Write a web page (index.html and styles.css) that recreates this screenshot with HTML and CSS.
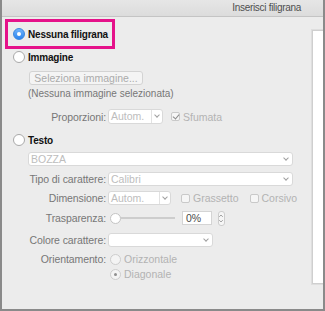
FILE: index.html
```html
<!DOCTYPE html>
<html lang="it">
<head>
    <meta charset="UTF-8">
    <title>Inserisci filigrana</title>
    <link rel="stylesheet" href="styles.css">
</head>
<body>
    <div class="window">
        <div class="titlebar">Inserisci filigrana</div>
        <div class="main">
            <div class="options">
                <div class="highlight">
                    <label class="radio-row">
                        <span class="radio checked"></span>
                        <span class="radio-label">Nessuna filigrana</span>
                    </label>
                </div>

                <label class="radio-row section">
                    <span class="radio"></span>
                    <span class="radio-label">Immagine</span>
                </label>
                <div class="button-row">
                    <span class="button">Seleziona immagine...</span>
                </div>
                <div class="note">(Nessuna immagine selezionata)</div>
                <div class="field-row row-prop">
                    <span class="field-label">Proporzioni:</span>
                    <span class="select w-prop"><span class="value">Autom.</span><span class="arrow"></span></span>
                    <span class="check checked"></span>
                    <span class="check-label">Sfumata</span>
                </div>

                <label class="radio-row section-testo">
                    <span class="radio"></span>
                    <span class="radio-label">Testo</span>
                </label>
                <div class="field-row row-bozza">
                    <span class="select w-bozza"><span class="value">BOZZA</span><span class="arrow plain"></span></span>
                </div>
                <div class="field-row row-tipo">
                    <span class="field-label">Tipo di carattere:</span>
                    <span class="select w-tipo"><span class="value">Calibri</span><span class="arrow plain"></span></span>
                </div>
                <div class="field-row row-dim">
                    <span class="field-label">Dimensione:</span>
                    <span class="select w-dim"><span class="value">Autom.</span><span class="arrow"></span></span>
                    <span class="check"></span>
                    <span class="check-label">Grassetto</span>
                    <span class="check gap-corsivo"></span>
                    <span class="check-label">Corsivo</span>
                </div>
                <div class="field-row row-trasp">
                    <span class="field-label">Trasparenza:</span>
                    <span class="slider"><span class="knob"></span><span class="track"></span></span>
                    <span class="textbox">0%</span>
                    <span class="stepper">
                        <svg width="7" height="15" viewBox="0 0 7 15"><path d="M1.5 5.5 L3.5 3.5 L5.5 5.5 M1.5 9.5 L3.5 11.5 L5.5 9.5" fill="none" stroke="#8a8a8a" stroke-width="1"/></svg>
                    </span>
                </div>
                <div class="field-row row-colore">
                    <span class="field-label">Colore carattere:</span>
                    <span class="select w-colore"><span class="value"></span><span class="arrow plain"></span></span>
                </div>
                <div class="field-row row-orient">
                    <span class="field-label">Orientamento:</span>
                    <span class="radio disabled"></span>
                    <span class="dis-label">Orizzontale</span>
                </div>
                <div class="field-row row-diag">
                    <span class="field-label"></span>
                    <span class="radio disabled dot"></span>
                    <span class="dis-label">Diagonale</span>
                </div>
            </div>
            <div class="preview"></div>
        </div>
    </div>
</body>
</html>
```

FILE: styles.css
```css
* {
    box-sizing: border-box;
}
body {
    margin: 0;
    font-family: "Liberation Sans", Arial, sans-serif;
    font-size: 10.5px;
    color: #6f6f6f;
}
.window {
    width: 325px;
    height: 311px;
    background: #ececec;
    border: 2px solid #8a8a8a;
    border-top: none;
    overflow: hidden;
}
.titlebar {
    height: 17px;
    line-height: 16px;
    font-size: 10px;
    letter-spacing: -0.3px;
    background: linear-gradient(#e6e6e6, #dcdcdc);
    border-bottom: 1px solid #c4c4c4;
    color: #4f4f4f;
    text-align: right;
    padding-right: 22px;
}
.main {
    display: flex;
}
.options {
    width: 310px;
    flex: none;
}
.preview {
    margin-top: 13px;
    height: 254px;
    width: 20px;
    flex: none;
    background: #fff;
    border: 1px solid #cfcfcf;
    border-right: none;
    box-shadow: 0 0 0 1px #dedede;
}

/* radios */
.radio-row {
    display: flex;
    align-items: center;
    height: 14px;
    padding-left: 11px;
    white-space: nowrap;
}
.radio {
    width: 12px;
    height: 12px;
    border-radius: 50%;
    background: #fff;
    border: 1px solid #a9a9a9;
    flex: none;
    position: relative;
}
.radio.checked {
    background: linear-gradient(#6fb3fa, #2a84f0);
    border-color: #3a86dd;
}
.radio.checked::after {
    content: "";
    position: absolute;
    left: 3px;
    top: 3px;
    width: 4px;
    height: 4px;
    border-radius: 50%;
    background: #fff;
}
.radio.disabled {
    width: 11px;
    height: 11px;
    border-color: #cdcdcd;
    background: #f4f4f4;
}
.radio.dot::after {
    content: "";
    position: absolute;
    left: 3px;
    top: 3px;
    width: 3px;
    height: 3px;
    border-radius: 50%;
    background: #8f8f8f;
}
.radio-label {
    margin-left: 3px;
    font-weight: bold;
    font-size: 10px;
    letter-spacing: -0.2px;
    color: #111;
}
.highlight {
    margin: 2px 0 0 3px;
    width: 110px;
    height: 30px;
    border: 3px solid #e5128a;
    display: flex;
    align-items: center;
}
.highlight .radio-row {
    padding-left: 5px;
}
.section {
    margin-top: 1px;
}
.section-testo {
    margin-top: 9px;
}

.button-row {
    margin-top: 7px;
    padding-left: 27px;
}
.button {
    display: inline-block;
    width: 114px;
    height: 14px;
    line-height: 12px;
    text-align: center;
    background: #f4f4f4;
    border: 1px solid #d3d3d3;
    border-radius: 3px;
    color: #ababab;
}
.note {
    margin-top: 2px;
    padding-left: 26px;
    height: 14px;
    line-height: 14px;
    font-size: 10px;
    color: #777;
}

/* labelled rows */
.field-row {
    display: flex;
    align-items: center;
    height: 14px;
    white-space: nowrap;
}
.field-label {
    width: 104px;
    margin-right: 2px;
    text-align: right;
    flex: none;
    letter-spacing: -0.1px;
    color: #777;
}
.row-prop { margin-top: 8px; height: 15px; }
.row-bozza { margin-top: 5px; padding-left: 26px; }
.row-tipo { margin-top: 6px; }
.row-dim { margin-top: 5px; }
.row-trasp { margin-top: 6px; }
.row-colore { margin-top: 8px; }
.row-orient { margin-top: 5px; }
.row-diag { margin-top: 1px; }

.select {
    display: flex;
    height: 14px;
    background: #fff;
    border: 1px solid #d9d9d9;
    border-radius: 3px;
    color: #bdbdbd;
    flex: none;
}
.select .value {
    flex: 1;
    line-height: 12px;
    padding-left: 2px;
}
.select .arrow {
    width: 11px;
    border-left: 1px solid #e2e2e2;
    position: relative;
}
.select .arrow.plain {
    border-left: none;
}
.select .arrow::after {
    content: "";
    position: absolute;
    left: 3px;
    top: 3px;
    width: 3px;
    height: 3px;
    border-right: 1px solid #a0a0a0;
    border-bottom: 1px solid #a0a0a0;
    transform: rotate(45deg);
}
.w-prop { width: 55px; height: 15px; }
.w-bozza { width: 265px; }
.w-tipo { width: 185px; }
.w-dim { width: 63px; }
.w-colore { width: 105px; }

.check {
    width: 9px;
    height: 9px;
    margin-left: 10px;
    border: 1px solid #c9c9c9;
    border-radius: 2px;
    background: #f6f6f6;
    flex: none;
    position: relative;
}
.row-prop .check {
    margin-left: 8px;
}
.check.checked::after {
    content: "";
    position: absolute;
    left: 2px;
    top: 0;
    width: 3px;
    height: 5px;
    border-right: 1px solid #8a8a8a;
    border-bottom: 1px solid #8a8a8a;
    transform: rotate(40deg);
}
.check.gap-corsivo {
    margin-left: 11px;
}
.check-label {
    margin-left: 3px;
    color: #b3b3b3;
}
.dis-label {
    margin-left: 3px;
    color: #b3b3b3;
}
.row-orient .radio,
.row-diag .radio {
    margin-left: 2px;
}

.slider {
    display: flex;
    align-items: center;
    width: 66px;
    flex: none;
    margin-left: 2px;
}
.knob {
    width: 11px;
    height: 11px;
    border-radius: 50%;
    background: #fff;
    border: 1px solid #c4c4c4;
    flex: none;
}
.track {
    flex: 1;
    height: 2px;
    background: #cdcdcd;
    margin-right: 1px;
}
.textbox {
    margin-left: 6px;
    width: 30px;
    height: 14px;
    line-height: 12px;
    padding-left: 3px;
    background: #fff;
    border: 1px solid #d4d4d4;
    color: #4a4a4a;
}
.stepper {
    margin-left: 6px;
    width: 7px;
    height: 15px;
    border: 1px solid #cdcdcd;
    border-radius: 3px;
    background: #f6f6f6;
    display: flex;
}
.stepper svg {
    margin-left: -1px;
    margin-top: -1px;
}
```
